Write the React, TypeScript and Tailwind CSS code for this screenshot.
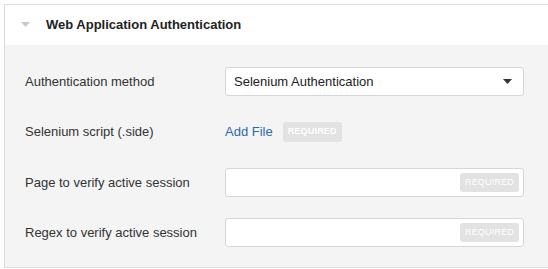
import React from "react";

function RequiredBadge({ className = "" }: { className?: string }) {
  return (
    <span
      className={`flex items-center justify-center rounded-[3px] bg-[#e2e2e2] text-[9px] font-bold uppercase tracking-[0.2px] text-white ${className}`}
    >
      Required
    </span>
  );
}

export default function App() {
  const rows = [
    { label: "Page to verify active session" },
    { label: "Regex to verify active session" },
  ];

  return (
    <div className="h-[269px] w-[548px] bg-white pl-1 pt-1 font-['Liberation_Sans',Arial,sans-serif] text-[#333]">
      <div className="h-[264px] border-b border-l border-t border-[#dcdcdc]">
        {/* Header */}
        <div className="flex h-[40px] items-center bg-white">
          <svg width="9" height="6" viewBox="0 0 9 6" className="ml-[16px]">
            <path d="M0 0 L9 0 L4.5 5 Z" fill="#c9c9c9" />
          </svg>
          <span className="ml-[16px] text-[13px] font-bold text-[#222]">
            Web Application Authentication
          </span>
        </div>

        {/* Body */}
        <div className="flex h-[222px] flex-col bg-[#f4f4f4] pl-[20px] pt-[22px]">
          <div className="flex h-[29px] items-center">
            <span className="w-[200px] text-[13px]">Authentication method</span>
            <div className="flex h-[29px] w-[299px] items-center justify-between rounded-[3px] border border-[#d6d6d6] bg-white pl-[8px] pr-[11px] text-[13px] text-[#222]">
              Selenium Authentication
              <svg width="9" height="5" viewBox="0 0 9 5">
                <path d="M0 0 L9 0 L4.5 5 Z" fill="#333" />
              </svg>
            </div>
          </div>

          <div className="mt-[25px] flex h-[21px] items-center">
            <span className="w-[200px] text-[13px]">Selenium script (.side)</span>
            <span className="text-[13px] text-[#2a6ab1]">Add File</span>
            <RequiredBadge className="ml-[10px] h-[20px] w-[59px]" />
          </div>

          {rows.map((row, i) => (
            <div
              key={row.label}
              className={`flex h-[29px] items-center ${i === 0 ? "mt-[26px]" : "mt-[21px]"}`}
            >
              <span className="w-[200px] text-[13px]">{row.label}</span>
              <div className="flex h-[29px] w-[299px] items-center justify-end rounded-[3px] border border-[#d6d6d6] bg-white pr-[4px]">
                <RequiredBadge className="h-[19px] w-[59px] font-normal" />
              </div>
            </div>
          ))}
        </div>
      </div>
    </div>
  );
}
